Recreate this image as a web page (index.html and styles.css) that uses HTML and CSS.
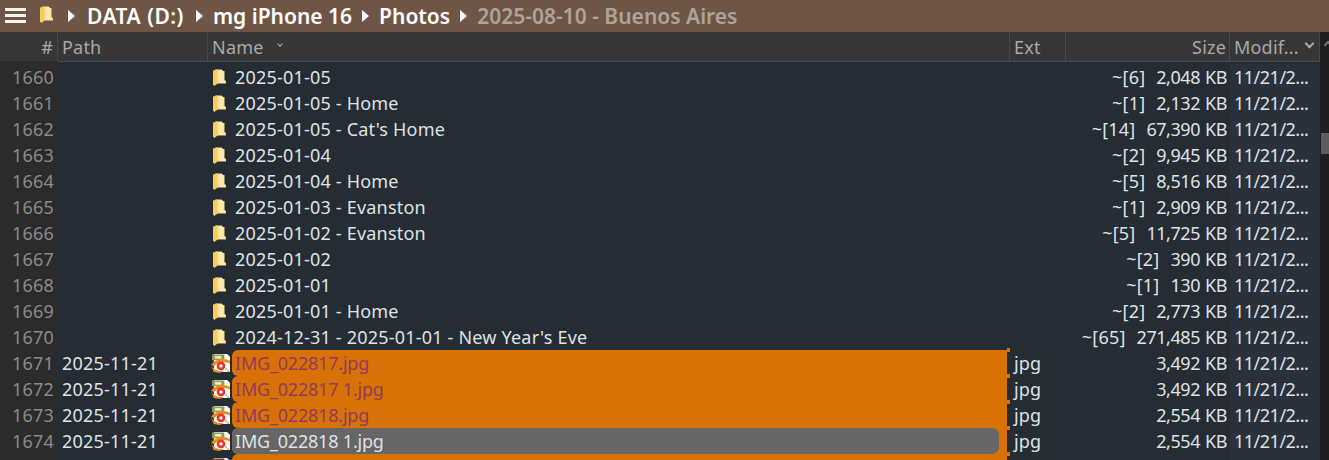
FILE: index.html
```html
<!DOCTYPE html>
<html lang="en">
  <head>
    <meta charset="UTF-8" />
    <title>Files</title>
    <link rel="stylesheet" href="styles.css">
  </head>
  <body>
    <svg class="defs" width="0" height="0">
      <symbol id="folder" viewBox="0 0 13 17">
        <path d="M2 0.5 H8.5 L10 2 H11.5 V11 L13 12 V14.5 H3 V2 Z" fill="#fbe08f"/>
        <path d="M6 1 H9 L10.5 3 V12 L12 14 H6 Z" fill="#fde9ab"/>
        <path d="M0 1.5 L4.5 0.5 V14.5 L1.5 17 L0 15.5 Z" fill="#f6cd5e"/>
      </symbol>
      <symbol id="jpg" viewBox="0 0 20 20">
        <path d="M3 0 L17 0 L20 3 L20 19 L3 19 Z" fill="#fcfcf6"/>
        <rect class="ico-tab" x="1" y="0.5" width="13" height="6"/>
        <rect x="4" y="2" width="7" height="3" fill="#e4e6c4"/>
        <path d="M0 11 Q9 2 20 7 L20 10 Q10 6 3 13 Z" fill="#f08a12"/>
        <path d="M0 12 Q4 19 14 18 L9 20 L3 19 Z" fill="#f08a12"/>
        <circle cx="10.5" cy="12.5" r="4.5" fill="#e53232"/>
        <circle cx="10.5" cy="12.5" r="1.8" fill="#fff"/>
        <path d="M15 15 h2 v2 h-2 z M17 17 h2 v2 h-2 z" fill="#d8b070"/>
      </symbol>
    </svg>

    <header class="crumbs">
      <div class="burger"><span></span><span></span><span></span></div>
      <svg class="crumb-folder"><use href="#folder"/></svg>
      <i class="tri first"></i>
      <span class="crumb drive">DATA (D:)</span>
      <i class="tri"></i>
      <span class="crumb">mg iPhone 16</span>
      <i class="tri"></i>
      <span class="crumb">Photos</span>
      <i class="tri"></i>
      <span class="crumb dim">2025-08-10 - Buenos Aires</span>
    </header>

    <div class="pane">
      <div class="list">
        <div class="row head">
          <div class="num">#</div>
          <div class="path">Path</div>
          <div class="name">Name <b class="sort small"></b></div>
          <div class="ext">Ext</div>
          <div class="size">Size</div>
          <div class="mod"><span>Modif...</span><b class="sort"></b></div>
        </div>

        <div class="row"><div class="num">1660</div><div class="path"></div><div class="name"><svg class="ico fold"><use href="#folder"/></svg><span class="label">2025-01-05</span></div><div class="ext"></div><div class="size"><span class="count">~[6]</span>2,048 KB</div><div class="mod">11/21/2...</div></div>
        <div class="row"><div class="num">1661</div><div class="path"></div><div class="name"><svg class="ico fold"><use href="#folder"/></svg><span class="label">2025-01-05 - Home</span></div><div class="ext"></div><div class="size"><span class="count">~[1]</span>2,132 KB</div><div class="mod">11/21/2...</div></div>
        <div class="row"><div class="num">1662</div><div class="path"></div><div class="name"><svg class="ico fold"><use href="#folder"/></svg><span class="label">2025-01-05 - Cat's Home</span></div><div class="ext"></div><div class="size"><span class="count">~[14]</span>67,390 KB</div><div class="mod">11/21/2...</div></div>
        <div class="row"><div class="num">1663</div><div class="path"></div><div class="name"><svg class="ico fold"><use href="#folder"/></svg><span class="label">2025-01-04</span></div><div class="ext"></div><div class="size"><span class="count">~[2]</span>9,945 KB</div><div class="mod">11/21/2...</div></div>
        <div class="row"><div class="num">1664</div><div class="path"></div><div class="name"><svg class="ico fold"><use href="#folder"/></svg><span class="label">2025-01-04 - Home</span></div><div class="ext"></div><div class="size"><span class="count">~[5]</span>8,516 KB</div><div class="mod">11/21/2...</div></div>
        <div class="row"><div class="num">1665</div><div class="path"></div><div class="name"><svg class="ico fold"><use href="#folder"/></svg><span class="label">2025-01-03 - Evanston</span></div><div class="ext"></div><div class="size"><span class="count">~[1]</span>2,909 KB</div><div class="mod">11/21/2...</div></div>
        <div class="row"><div class="num">1666</div><div class="path"></div><div class="name"><svg class="ico fold"><use href="#folder"/></svg><span class="label">2025-01-02 - Evanston</span></div><div class="ext"></div><div class="size"><span class="count">~[5]</span>11,725 KB</div><div class="mod">11/21/2...</div></div>
        <div class="row"><div class="num">1667</div><div class="path"></div><div class="name"><svg class="ico fold"><use href="#folder"/></svg><span class="label">2025-01-02</span></div><div class="ext"></div><div class="size"><span class="count">~[2]</span>390 KB</div><div class="mod">11/21/2...</div></div>
        <div class="row"><div class="num">1668</div><div class="path"></div><div class="name"><svg class="ico fold"><use href="#folder"/></svg><span class="label">2025-01-01</span></div><div class="ext"></div><div class="size"><span class="count">~[1]</span>130 KB</div><div class="mod">11/21/2...</div></div>
        <div class="row"><div class="num">1669</div><div class="path"></div><div class="name"><svg class="ico fold"><use href="#folder"/></svg><span class="label">2025-01-01 - Home</span></div><div class="ext"></div><div class="size"><span class="count">~[2]</span>2,773 KB</div><div class="mod">11/21/2...</div></div>
        <div class="row"><div class="num">1670</div><div class="path"></div><div class="name"><svg class="ico fold"><use href="#folder"/></svg><span class="label">2024-12-31 - 2025-01-01 - New Year's Eve</span></div><div class="ext"></div><div class="size"><span class="count">~[65]</span>271,485 KB</div><div class="mod">11/21/2...</div></div>
        <div class="row"><div class="num">1671</div><div class="path">2025-11-21</div><div class="name"><svg class="ico"><use href="#jpg"/></svg><span class="label tagged">IMG_022817.jpg</span></div><div class="ext">jpg</div><div class="size">3,492 KB</div><div class="mod">11/21/2...</div></div>
        <div class="row"><div class="num">1672</div><div class="path">2025-11-21</div><div class="name"><svg class="ico"><use href="#jpg"/></svg><span class="label tagged">IMG_022817 1.jpg</span></div><div class="ext">jpg</div><div class="size">3,492 KB</div><div class="mod">11/21/2...</div></div>
        <div class="row"><div class="num">1673</div><div class="path">2025-11-21</div><div class="name"><svg class="ico"><use href="#jpg"/></svg><span class="label tagged">IMG_022818.jpg</span></div><div class="ext">jpg</div><div class="size">2,554 KB</div><div class="mod">11/21/2...</div></div>
        <div class="row"><div class="num">1674</div><div class="path">2025-11-21</div><div class="name"><svg class="ico"><use href="#jpg"/></svg><span class="label tagged holds-current"><span class="current">IMG_022818 1.jpg</span></span></div><div class="ext">jpg</div><div class="size">2,554 KB</div><div class="mod">11/21/2...</div></div>
        <div class="row"><div class="num"></div><div class="path"></div><div class="name"><svg class="ico raw"><use href="#jpg"/></svg><span class="label tagged"></span></div><div class="ext"></div><div class="size"></div><div class="mod"></div></div>
      </div>
      <div class="scroll"><i class="chev"></i><div class="thumb"></div></div>
    </div>
  </body>
</html>
```

FILE: styles.css
```css
:root {
  --title: #6e5546;
  --head: #373737;
  --line: #4a4a4a;
  --gutter: #2b2b2b;
  --bg: #252c34;
  --mod-bg: #2a313a;
  --text: #dfe3e6;
  --muted: #8a8a8a;
  --tag: #d97206;
}
* {
  box-sizing: border-box;
}
html,
body {
  height: 460px;
}
body {
  margin: 0;
  overflow: hidden;
  background: var(--bg);
  color: var(--text);
  font-family: "Noto Sans", "Open Sans", sans-serif;
  font-size: 18px;
  letter-spacing: 0.2px;
}
.defs {
  display: block;
  height: 0;
}

/* ---------- Breadcrumb bar ---------- */
.crumbs {
  display: flex;
  align-items: center;
  height: 32px;
  padding-left: 5px;
  background: var(--title);
  color: #fff;
  font-size: 21px;
  font-weight: 600;
  letter-spacing: 0;
}
.burger {
  display: flex;
  flex-direction: column;
  gap: 3px;
  width: 21px;
  margin-top: -2px;
}
.burger span {
  height: 3px;
  background: #f4f4f4;
}
.crumb-folder {
  width: 13px;
  height: 17px;
  margin: -3px 0 0 14px;
}
.tri {
  width: 0;
  height: 0;
  margin: 0 10px;
  border-left: 7px solid #fff;
  border-top: 6.5px solid transparent;
  border-bottom: 6.5px solid transparent;
}
.tri.first {
  margin-left: 15px;
  margin-right: 12px;
}
.drive {
  letter-spacing: 0.5px;
  margin-right: 2px;
}
.dim {
  color: #ada39b;
}

/* ---------- File list ---------- */
.pane {
  display: flex;
}
.list {
  flex: 1;
}
.row {
  display: grid;
  grid-template-columns: 58px 150px 802px 56px 164px 90px;
  height: 26px;
  align-items: center;
  white-space: nowrap;
}
.row > div {
  height: 100%;
  display: flex;
  align-items: center;
}
.head {
  height: 30px;
  margin-bottom: 2px;
  background: var(--head);
  border-bottom: 1px solid var(--line);
  color: #a9a9a9;
}
.head > div {
  border-right: 1px solid var(--line);
}
.num {
  justify-content: flex-end;
  padding-right: 4px;
  background: var(--gutter);
  color: var(--muted);
  box-shadow: 0 3px 0 var(--gutter), 0 -3px 0 var(--gutter);
}
.head .num {
  background: none;
  box-shadow: none;
  color: #a9a9a9;
}
.path {
  padding-left: 4px;
}
.name {
  padding: 0 3px;
}
.head .name {
  padding-left: 4px;
}
.ico {
  flex: none;
  width: 19px;
  height: 19px;
  margin-right: 2px;
}
.ico.fold {
  width: 13px;
  height: 17px;
  margin: 0 6px 0 2px;
}
.ico-tab {
  fill: var(--tab, #8b9a55);
}
.ico.raw {
  --tab: #7a3438;
}
.label {
  flex: 1;
  padding-left: 3px;
}
.tagged {
  position: relative;
  align-self: stretch;
  display: flex;
  align-items: center;
  background: var(--tag);
  color: #943a5c;
  letter-spacing: -0.2px;
  border-radius: 6px 0 0 6px;
}
/* small tabs where two tagged rows meet */
.tagged::after {
  content: "";
  position: absolute;
  top: -2px;
  right: -3px;
  width: 3px;
  height: 4px;
  background: var(--tag);
}
.holds-current {
  padding: 0 8px 0 0;
}
.current {
  flex: 1;
  align-self: stretch;
  display: flex;
  align-items: center;
  padding-left: 3px;
  background: #666;
  color: var(--text);
  border-radius: 7px;
}
.ext {
  padding-left: 4px;
}
.size {
  justify-content: flex-end;
  padding-right: 3px;
  letter-spacing: -0.45px;
  word-spacing: 0.8px;
}
.head .size {
  letter-spacing: 0.2px;
}
.count {
  margin-right: 11px;
  letter-spacing: 0.2px;
}
.mod {
  padding-left: 4px;
  background: var(--mod-bg);
  letter-spacing: -0.5px;
}
.head .mod {
  background: none;
  justify-content: space-between;
  padding-right: 6px;
  letter-spacing: 0.2px;
}
.sort {
  display: block;
  width: 7px;
  height: 7px;
  margin-bottom: 6px;
  border-right: 2px solid #aaa;
  border-bottom: 2px solid #aaa;
  transform: rotate(45deg);
}
.sort.small {
  width: 4px;
  height: 4px;
  margin-left: 14px;
  border-width: 1px;
}

/* ---------- Scrollbar ---------- */
.scroll {
  position: relative;
  width: 9px;
  height: 428px;
  background: #1e1e1e;
}
.thumb {
  position: absolute;
  top: 101px;
  right: 0;
  width: 8px;
  height: 21px;
  background: #5c5c5c;
}
.chev {
  position: absolute;
  top: 10px;
  left: 5px;
  width: 6px;
  height: 6px;
  border-left: 2px solid #777;
  border-top: 2px solid #777;
  transform: rotate(45deg);
}
```
